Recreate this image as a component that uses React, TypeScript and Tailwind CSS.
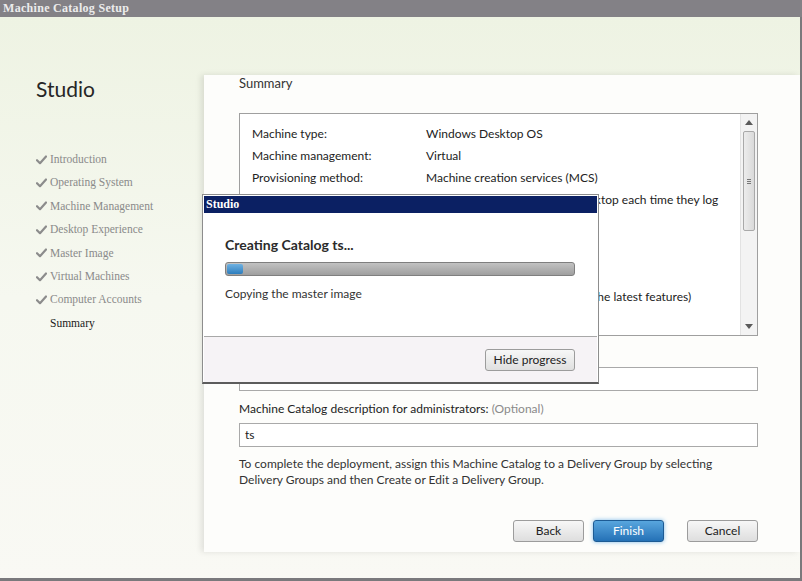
import React from "react";

const UI = "font-['Lato','Open_Sans',sans-serif]";
const SERIF = "font-['Liberation_Serif','Times_New_Roman',serif]";

const steps = [
  "Introduction",
  "Operating System",
  "Machine Management",
  "Desktop Experience",
  "Master Image",
  "Virtual Machines",
  "Computer Accounts",
];

type Row = { label: string; lines: string[]; gap?: string };

const rows: Row[] = [
  { label: "Machine type:", lines: ["Windows Desktop OS"] },
  { label: "Machine management:", lines: ["Virtual"] },
  { label: "Provisioning method:", lines: ["Machine creation services (MCS)"] },
  {
    label: "Desktop type:",
    lines: ["Users connect to a (random) desktop each time they log", "on"],
  },
  { label: "Master image name:", lines: ["Win7-Master"] },
  { label: "Computer accounts:", lines: ["Create new accounts"] },
  {
    label: "VDA version:",
    lines: ["7.6 (or newer, so we can access the latest features)"],
    gap: "mt-[9px]",
  },
];

function Check() {
  return (
    <svg width="11" height="10" viewBox="0 0 11 10" className="shrink-0">
      <path
        d="M1 5.2 L4 8.2 L10 1.5"
        fill="none"
        stroke="#8c8c8c"
        strokeWidth="2.2"
        strokeLinecap="round"
        strokeLinejoin="round"
      />
    </svg>
  );
}

function Scrollbar() {
  return (
    <div className="flex flex-col w-[17px] shrink-0 h-full border-l border-[#e2e2e2] bg-[#f3f3f3]">
      <div className="h-[17px] flex items-center justify-center">
        <svg width="8" height="5" viewBox="0 0 8 5">
          <path d="M0 5 L4 0 L8 5 Z" fill="#5a5a5a" />
        </svg>
      </div>
      <div className="mx-[2px] h-[100px] rounded-[2px] border border-[#a9a9a9] bg-gradient-to-r from-[#ececec] to-[#dadada] flex items-center justify-center">
        <div className="flex flex-col gap-[1px]">
          <div className="w-[4px] h-[1px] bg-[#777]" />
          <div className="w-[4px] h-[1px] bg-[#777]" />
          <div className="w-[4px] h-[1px] bg-[#777]" />
        </div>
      </div>
      <div className="flex-1" />
      <div className="h-[17px] flex items-center justify-center">
        <svg width="8" height="5" viewBox="0 0 8 5">
          <path d="M0 0 L8 0 L4 5 Z" fill="#5a5a5a" />
        </svg>
      </div>
    </div>
  );
}

function WizardButton({ label, primary }: { label: string; primary?: boolean }) {
  return (
    <button
      className={
        primary
          ? "w-[71px] h-[22px] rounded-[3px] border border-[#1d5b94] bg-gradient-to-b from-[#58a6de] to-[#2471b6] text-white text-[12px] shadow-[0_0_4px_#7fbbe9]"
          : "w-[71px] h-[22px] rounded-[3px] border border-[#9c9c9c] bg-gradient-to-b from-[#f7f7f7] to-[#dedede] text-[#222] text-[12px]"
      }
    >
      {label}
    </button>
  );
}

function ProgressDialog() {
  return (
    <div className="absolute left-[202px] top-[194px] w-[397px] h-[190px] flex flex-col border border-[#8d8d8d] border-b-2 border-b-[#5c5c5c] bg-white p-[1px] pb-0">
      <div
        className={`h-[17px] bg-[#0b2063] text-white text-[12px] font-bold leading-[17px] pl-[2px] ${SERIF}`}
      >
        Studio
      </div>
      <div className="h-[123px] bg-white pl-[21px] pt-[23px] flex flex-col">
        <div className={`text-[14px] font-bold text-[#2b2b2b] leading-[18px] ${UI}`}>
          Creating Catalog ts...
        </div>
        <div className="mt-[8px] w-[350px] h-[14px] rounded-[3px] border border-[#7f7f7f] bg-gradient-to-b from-[#c2c2c2] to-[#9f9f9f] p-[1px]">
          <div className="w-[16px] h-full rounded-[2px] bg-gradient-to-b from-[#6fb2e2] to-[#2b7dbd]" />
        </div>
        <div className={`mt-[10px] text-[12px] text-[#333] leading-[16px] ${UI}`}>
          Copying the master image
        </div>
      </div>
      <div className="flex-1 border-t border-[#a8a8a8] bg-[#f6f3f6] flex justify-end pt-[12px] pr-[22px]">
        <button
          className={`w-[90px] h-[22px] rounded-[3px] border border-[#9c9c9c] bg-gradient-to-b from-[#f7f7f7] to-[#e0e0e0] text-[12px] text-[#222] ${UI}`}
        >
          Hide progress
        </button>
      </div>
    </div>
  );
}

export default function App() {
  return (
    <div className="relative w-[802px] h-[581px] overflow-hidden flex flex-col bg-[#7a797c]">
      {/* Title bar */}
      <div
        className={`h-[17px] shrink-0 bg-[#838186] text-[#ececec] text-[12px] font-bold leading-[17px] pl-[3px] tracking-[0.3px] ${SERIF}`}
      >
        Machine Catalog Setup
      </div>

      <div className="flex-1 flex mr-[2px] mb-[3px] bg-gradient-to-b from-[#eef3e3] via-[#f6f8f0] to-[#f9f9f4]">
        {/* Left navigation */}
        <div className="w-[204px] shrink-0 pl-[36px] pt-[59px]">
          <div className={`text-[21px] text-[#262626] leading-[26px] ${UI}`}>Studio</div>
          <div className={`mt-[46px] flex flex-col ${SERIF}`}>
            {steps.map((s) => (
              <div key={s} className="h-[23.4px] flex items-center gap-[3px] text-[11.5px] text-[#8a8a8a]">
                <Check />
                <span>{s}</span>
              </div>
            ))}
            <div className="h-[23.4px] flex items-center pl-[14px] text-[11.5px] text-[#1a1a1a]">
              Summary
            </div>
          </div>
        </div>

        {/* Right content panel */}
        <div
          className={`flex-1 min-w-0 mt-[58px] mb-[26px] bg-[#fdfdfb] shadow-[-3px_0_6px_rgba(0,0,0,0.1)] pl-[35px] pr-[42px] flex flex-col ${UI}`}
        >
          <div className="h-[16px] text-[13px] text-[#333] leading-[16px]">Summary</div>

          <div className="mt-[22px] h-[223px] border border-[#9f9f9f] bg-white flex">
            <div className="flex-1 min-w-0 pl-[12px] pt-[9px] overflow-hidden">
              {rows.map((r) => (
                <div key={r.label} className={`flex text-[12px] text-[#222] leading-[22px] ${r.gap ?? ""}`}>
                  <div className="w-[174px] shrink-0">{r.label}</div>
                  <div className="whitespace-nowrap">
                    {r.lines.map((l) => (
                      <div key={l}>{l}</div>
                    ))}
                  </div>
                </div>
              ))}
            </div>
            <Scrollbar />
          </div>

          <div className="mt-[10px] h-[16px] text-[12px] text-[#222] leading-[16px]">
            Machine Catalog name:
          </div>
          <div className="mt-[5px] h-[24px] border border-[#a9a9a9] bg-white pl-[5px] text-[12px] leading-[22px] text-[#222]">
            ts
          </div>

          <div className="mt-[10px] h-[16px] text-[12px] leading-[16px] text-[#222]">
            Machine Catalog description for administrators:{" "}
            <span className="text-[#8a8a8a]">(Optional)</span>
          </div>
          <div className="mt-[6px] h-[24px] border border-[#a9a9a9] bg-white pl-[5px] text-[12px] leading-[22px] text-[#222]">
            ts
          </div>

          <div className="mt-[9px] text-[12px] leading-[16px] text-[#333]">
            To complete the deployment, assign this Machine Catalog to a Delivery Group by selecting
            <br />
            Delivery Groups and then Create or Edit a Delivery Group.
          </div>

          <div className="mt-[32px] flex justify-end">
            <WizardButton label="Back" />
            <div className="w-[9px]" />
            <WizardButton label="Finish" primary />
            <div className="w-[23px]" />
            <WizardButton label="Cancel" />
          </div>
        </div>
      </div>

      <ProgressDialog />
    </div>
  );
}
